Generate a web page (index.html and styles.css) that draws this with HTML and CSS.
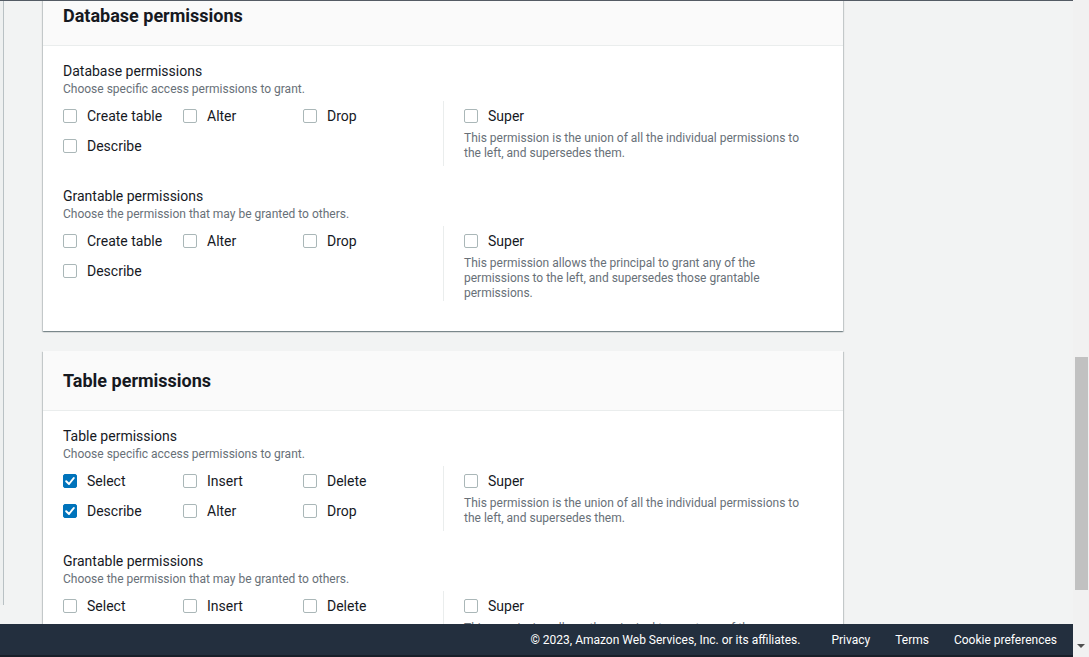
FILE: index.html
```html
<!DOCTYPE html>
<html lang="en">
<head>
<meta charset="utf-8">
<title>Permissions</title>
<link rel="stylesheet" href="styles.css">
</head>
<body>
<div class="viewport">
  <div class="topline"></div>
  <div class="content">
    <div class="navedge"><div class="navline"></div></div>
    <div class="main">
      <section class="card">
        <div class="card-header"><h2>Database permissions</h2></div>
        <div class="card-body">
          <div class="field">
            <div class="label">Database permissions</div>
            <div class="desc">Choose specific access permissions to grant.</div>
            <div class="perm-row">
              <div class="grid">
                <label class="cb"><span class="box"></span>Create table</label>
                <label class="cb"><span class="box"></span>Alter</label>
                <label class="cb"><span class="box"></span>Drop</label>
                <label class="cb"><span class="box"></span>Describe</label>
              </div>
              <div class="super">
                <label class="cb"><span class="box"></span>Super</label>
                <div class="super-desc">This permission is the union of all the individual permissions to the left, and supersedes them.</div>
              </div>
            </div>
          </div>
          <div class="field">
            <div class="label">Grantable permissions</div>
            <div class="desc">Choose the permission that may be granted to others.</div>
            <div class="perm-row">
              <div class="grid">
                <label class="cb"><span class="box"></span>Create table</label>
                <label class="cb"><span class="box"></span>Alter</label>
                <label class="cb"><span class="box"></span>Drop</label>
                <label class="cb"><span class="box"></span>Describe</label>
              </div>
              <div class="super">
                <label class="cb"><span class="box"></span>Super</label>
                <div class="super-desc">This permission allows the principal to grant any of the permissions to the left, and supersedes those grantable permissions.</div>
              </div>
            </div>
          </div>
        </div>
      </section>

      <section class="card">
        <div class="card-header"><h2>Table permissions</h2></div>
        <div class="card-body">
          <div class="field">
            <div class="label">Table permissions</div>
            <div class="desc">Choose specific access permissions to grant.</div>
            <div class="perm-row">
              <div class="grid">
                <label class="cb"><span class="box checked"><svg viewBox="0 0 14 14" width="14" height="14"><polyline points="3.2,7.3 6,10 10.8,4" fill="none" stroke="#fff" stroke-width="2" stroke-linecap="round" stroke-linejoin="round"/></svg></span>Select</label>
                <label class="cb"><span class="box"></span>Insert</label>
                <label class="cb"><span class="box"></span>Delete</label>
                <label class="cb"><span class="box checked"><svg viewBox="0 0 14 14" width="14" height="14"><polyline points="3.2,7.3 6,10 10.8,4" fill="none" stroke="#fff" stroke-width="2" stroke-linecap="round" stroke-linejoin="round"/></svg></span>Describe</label>
                <label class="cb"><span class="box"></span>Alter</label>
                <label class="cb"><span class="box"></span>Drop</label>
              </div>
              <div class="super">
                <label class="cb"><span class="box"></span>Super</label>
                <div class="super-desc">This permission is the union of all the individual permissions to the left, and supersedes them.</div>
              </div>
            </div>
          </div>
          <div class="field">
            <div class="label">Grantable permissions</div>
            <div class="desc">Choose the permission that may be granted to others.</div>
            <div class="perm-row">
              <div class="grid">
                <label class="cb"><span class="box"></span>Select</label>
                <label class="cb"><span class="box"></span>Insert</label>
                <label class="cb"><span class="box"></span>Delete</label>
                <label class="cb"><span class="box"></span>Describe</label>
                <label class="cb"><span class="box"></span>Alter</label>
                <label class="cb"><span class="box"></span>Drop</label>
              </div>
              <div class="super">
                <label class="cb"><span class="box"></span>Super</label>
                <div class="super-desc">This permission allows the principal to grant any of the permissions to the left, and supersedes those grantable permissions.</div>
              </div>
            </div>
          </div>
        </div>
      </section>
    </div>
  </div>
  <footer class="footer">
    <span class="copy">© 2023, Amazon Web Services, Inc. or its affiliates.</span>
    <a class="flink first">Privacy</a>
    <a class="flink">Terms</a>
    <a class="flink">Cookie preferences</a>
  </footer>
</div>
<div class="scrollbar">
  <div class="thumb"></div>
  <div class="arrow"></div>
</div>
</body>
</html>
```

FILE: styles.css
```css
html, body {
  margin: 0;
  padding: 0;
  height: 100%;
  overflow: hidden;
}
body {
  display: flex;
  background: #f2f3f3;
  font-family: Roboto, "Liberation Sans", Arial, sans-serif;
  color: #16191f;
}
.viewport {
  flex: 1;
  position: relative;
  overflow: hidden;
  display: flex;
  flex-direction: column;
}
.topline {
  height: 1px;
  background: #545b64;
  flex: none;
  position: relative;
  z-index: 2;
}
.content {
  display: flex;
  flex: 1;
  min-height: 0;
}
.navedge {
  width: 43px;
  flex: none;
  display: flex;
}
.navline {
  width: 3px;
  height: 604px;
  background: #eef0f0;
  border-right: 1px solid #b9c1c4;
}
.main {
  width: 800px;
  flex: none;
  margin-top: -15px;
}
.card {
  background: #fff;
  box-shadow: 0 1px 1px 0 rgba(0, 28, 36, 0.3), 1px 1px 1px 0 rgba(0, 28, 36, 0.15), -1px 1px 1px 0 rgba(0, 28, 36, 0.15);
  margin-bottom: 20px;
}
.card-header {
  background: #fafafa;
  padding: 19px 20px 18px;
  border-bottom: 1px solid #eaeded;
}
.card-header h2 {
  margin: 0;
  font-size: 18px;
  line-height: 22px;
  font-weight: 700;
  color: #16191f;
}
.card-body {
  padding: 15px 20px 30px;
}
.field + .field {
  margin-top: 20px;
}
.label {
  font-size: 14px;
  line-height: 20px;
  color: #16191f;
}
.desc {
  font-size: 12px;
  line-height: 16px;
  color: #687078;
}
.perm-row {
  display: flex;
  margin-top: 4px;
  align-items: stretch;
}
.grid {
  width: 380px;
  display: grid;
  grid-template-columns: repeat(3, 120px);
  grid-auto-rows: 30px;
  padding-bottom: 5px;
  align-content: start;
}
.cb {
  display: flex;
  align-items: center;
  height: 30px;
  font-size: 14px;
  color: #16191f;
}
.box {
  width: 12px;
  height: 12px;
  border: 1px solid #aab7b8;
  border-radius: 2px;
  background: #fff;
  margin-right: 10px;
  flex: none;
  position: relative;
}
.box.checked {
  background: #0073bb;
  border-color: #0073bb;
}
.box svg {
  position: absolute;
  left: -1px;
  top: -1px;
}
.super {
  border-left: 1px solid #eaeded;
  padding-left: 20px;
}
.super-desc {
  font-size: 12px;
  line-height: 15px;
  color: #687078;
  width: 350px;
}
.footer {
  position: absolute;
  left: 0;
  right: 0;
  bottom: 0;
  height: 31px;
  background: #232f3e;
  border-bottom: 2px solid #181f29;
  display: flex;
  align-items: center;
  justify-content: flex-end;
  padding-right: 16px;
  color: #fff;
  font-size: 12px;
}
.flink {
  margin-left: 25px;
  color: #fff;
}
.flink.first {
  margin-left: 31px;
}
.scrollbar {
  width: 16px;
  flex: none;
  background: #f1f1f1;
  display: flex;
  flex-direction: column;
  align-items: center;
}
.thumb {
  width: 13px;
  height: 233px;
  margin-top: 357px;
  background: #c1c1c1;
}
.arrow {
  margin-top: auto;
  margin-bottom: 9px;
  width: 0;
  height: 0;
  border-left: 4px solid transparent;
  border-right: 4px solid transparent;
  border-top: 4px solid #505050;
}
```
